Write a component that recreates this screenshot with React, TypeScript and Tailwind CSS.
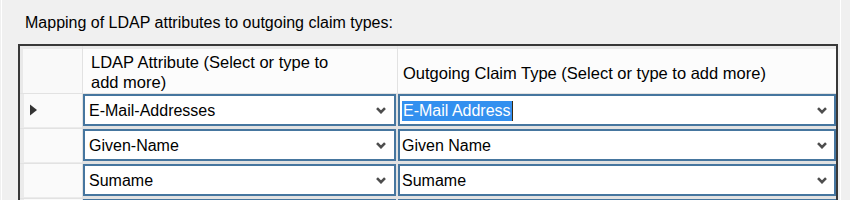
import React from 'react';

type Row = { attr: string; claim: string; current?: boolean; selected?: boolean };

const ROWS: Row[] = [
  { attr: 'E-Mail-Addresses', claim: 'E-Mail Address', current: true, selected: true },
  { attr: 'Given-Name', claim: 'Given Name' },
  { attr: 'Sumame', claim: 'Sumame' },
  { attr: '', claim: '' },
];

// little "v" drawn at the right of each combo box
const Chevron = () => (
  <svg width="10" height="7" viewBox="0 0 10 7" className="shrink-0">
    <polyline points="1,1.2 5,5.2 9,1.2" fill="none" stroke="#4d4d4d" strokeWidth="2.6" />
  </svg>
);

const RowArrow = () => (
  <svg width="7" height="12" viewBox="0 0 7 12">
    <polygon points="0,0.5 7,6 0,11.5" fill="#333333" />
  </svg>
);

const Combo: React.FC<{ text: string; selected?: boolean; padLeft: string; padRight: string }> = ({
  text,
  selected,
  padLeft,
  padRight,
}) => (
  <div
    className={`h-[32px] flex items-center bg-white border-2 border-[#46769f] ${padLeft} ${padRight}`}
  >
    <div className="flex-1 flex items-center pt-[2px] min-w-0">
      {selected ? (
        <>
          <span className="bg-[#3390ef] text-white px-[1px] whitespace-nowrap">{text}</span>
          <span className="w-[1px] h-[20px] bg-[#3a2a10]" />
        </>
      ) : (
        <span className="whitespace-nowrap">{text}</span>
      )}
    </div>
    <Chevron />
  </div>
);

const App: React.FC = () => {
  return (
    <div className="w-[850px] h-[200px] overflow-hidden bg-[#f0f0f0] text-black text-[16px] leading-[20px] font-['Liberation_Sans',Arial,sans-serif]">
      <div className="ml-[1px] w-[840px] h-[200px] border-x border-white">
        {/* group label */}
        <div className="h-[44px] pt-[13px] pl-[23px] whitespace-nowrap">
          Mapping of LDAP attributes to outgoing claim types:
        </div>

        {/* grid */}
        <div className="ml-[16px] w-[820px] border-2 border-b-0 border-[#383838] bg-[#e2e2e2]">
          <div className="grid grid-cols-[62px_314px_438px] gap-x-px gap-y-px">
            {/* header row */}
            <div className="h-[47px] bg-[#f9f9f9] border-t-[3px] border-l-[3px] border-[#e9e9e9]" />
            <div className="h-[47px] bg-[#fcfcfc] border-t-[3px] border-[#e9e9e9] pt-[2px] pl-[8px] flex items-center text-[16.5px]">
              <span>
                LDAP Attribute (Select or type to
                <br />
                add more)
              </span>
            </div>
            <div className="h-[47px] bg-[#fcfcfc] border-t-[3px] border-[#e9e9e9] pt-[3px] pl-[5px] flex items-center text-[16.5px]">
              <span className="whitespace-nowrap">Outgoing Claim Type (Select or type to add more)</span>
            </div>

            {/* data rows */}
            {ROWS.map((row, i) => (
              <React.Fragment key={i}>
                <div className="h-[34px] bg-[#fafafa] border-l-[4px] border-b-[1px] border-[#ebebeb] pl-[6px] pb-[1px] flex items-center">
                  {row.current && <RowArrow />}
                </div>
                <div className="h-[34px] pr-[1px]">
                  <Combo text={row.attr} padLeft="pl-[4px]" padRight="pr-[8px]" />
                </div>
                <div className="h-[34px]">
                  <Combo text={row.claim} selected={row.selected} padLeft="pl-[2px]" padRight="pr-[7px]" />
                </div>
              </React.Fragment>
            ))}
          </div>
        </div>
      </div>
    </div>
  );
};

export default App;
